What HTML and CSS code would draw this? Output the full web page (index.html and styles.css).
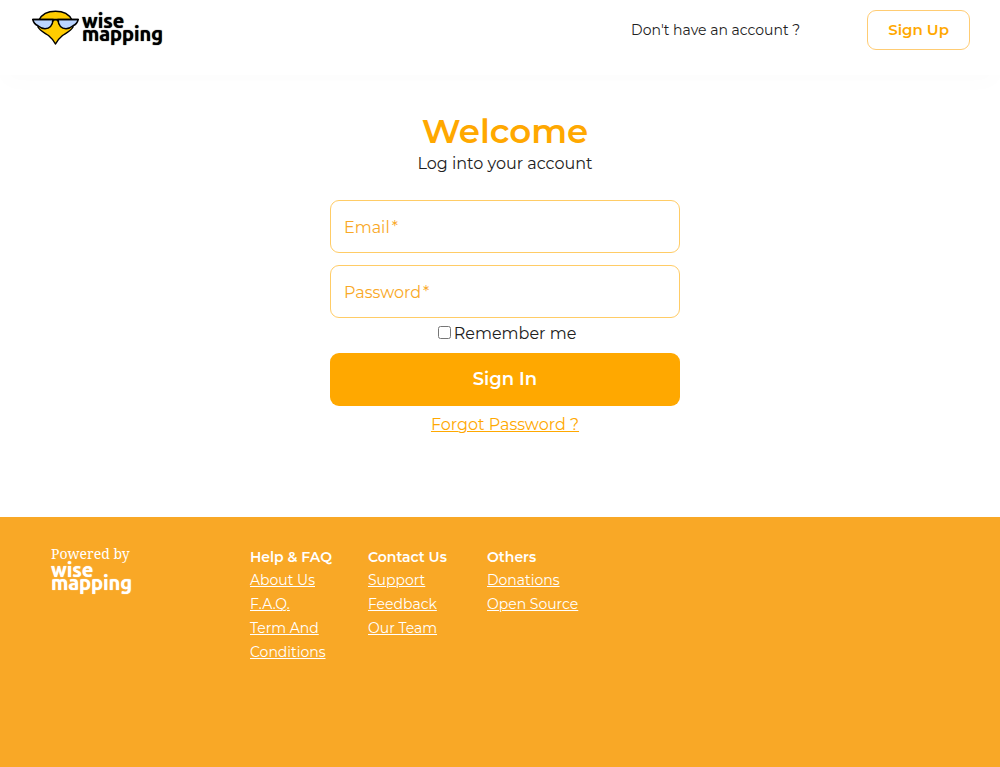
FILE: index.html
```html
<!DOCTYPE html>
<html lang="en">
<head>
<meta charset="utf-8">
<meta name="viewport" content="width=device-width, initial-scale=1">
<title>Login | WiseMapping</title>
<link rel="stylesheet" href="styles.css">
</head>
<body class="page">
<header class="header">
  <a class="logo" href="#" aria-label="WiseMapping">
    <svg class="logo-mark" viewBox="0 0 48 36" aria-hidden="true">
      <path d="M7 10C10 4 16 1.300 23.500 1.300s13.500 2.700 16.500 8.700l1 7c-2 4-7 6-10.500 8.500-3 2.500-5 4.500-7 8.500-2-4-4-6-7-8.500-3.500-2.500-8.500-4.500-10.500-8.500z" fill="#ffcc00" stroke="#000" stroke-width="1.500" stroke-linejoin="round"/>
      <path d="M.8 9.500H21.200C20.500 15.500 17.500 18.700 13 18.700 9.500 18.700 8.500 18 6 15.800 3 14.500 1.500 12.500.8 9.500z" fill="#bcd6ff" stroke="#000" stroke-width="1.500" stroke-linejoin="round"/>
      <path d="M46.200 9.500H25.800C26.500 15.500 29.500 18.700 34 18.700 37.500 18.700 38.500 18 41 15.800 44 14.500 45.500 12.500 46.200 9.500z" fill="#bcd6ff" stroke="#000" stroke-width="1.500" stroke-linejoin="round"/>
      <path d="M.8 9.500H46.200M20.500 11.500C21.500 9.300 25.500 9.300 26.500 11.500" fill="none" stroke="#000" stroke-width="1.500" stroke-linecap="round"/>
    </svg>
    <span class="wordmark">wise<br>mapping</span>
  </a>
  <span class="header-note">Don't have an account ?</span>
  <button class="signup" type="button">Sign Up</button>
</header>

<main class="main">
  <h1 class="title">Welcome</h1>
  <p class="subtitle">Log into your account</p>
  <form class="form">
    <div class="field">
      <input class="field-input" id="email" type="email" required>
      <label class="field-label" for="email">Email<span class="star">*</span></label>
    </div>
    <div class="field">
      <input class="field-input" id="password" type="password" required>
      <label class="field-label" for="password">Password<span class="star">*</span></label>
    </div>
    <div class="remember">
      <input class="remember-box" id="remember" type="checkbox"><label for="remember">Remember me</label>
    </div>
    <button class="signin" type="submit">Sign In</button>
  </form>
  <a class="forgot" href="#">Forgot Password ?</a>
</main>

<footer class="footer">
  <div class="powered">
    <span class="powered-by">Powered by</span>
    <span class="wordmark wordmark-footer">wise<br>mapping</span>
  </div>
  <nav class="links" aria-labelledby="help">
    <h2 class="links-title" id="help">Help &amp; FAQ</h2>
    <a href="#">About Us</a>
    <a href="#">F.A.Q.</a>
    <a href="#">Term And Conditions</a>
  </nav>
  <nav class="links" aria-labelledby="contact">
    <h2 class="links-title" id="contact">Contact Us</h2>
    <a href="#">Support</a>
    <a href="#">Feedback</a>
    <a href="#">Our Team</a>
  </nav>
  <nav class="links" aria-labelledby="others">
    <h2 class="links-title" id="others">Others</h2>
    <a href="#">Donations</a>
    <a href="#">Open Source</a>
  </nav>
</footer>
</body>
</html>
```

FILE: styles.css
```css
* { box-sizing: border-box; }

.page {
  margin: 0;
  min-height: 100vh;
  display: flex;
  flex-direction: column;
  background: #fff;
  color: #212121;
  font-family: Montserrat, Inter, "Open Sans", sans-serif;
  font-size: 16px;
  font-weight: 400;
  line-height: 24px;
}

button, input { font-family: inherit; }

.header {
  display: flex;
  align-items: flex-start;
  padding: 10px 30px 25px 32px;
  box-shadow: 0 12px 20px -2px rgba(0, 0, 0, 0.012);
}

.logo {
  display: flex;
  gap: 2px;
  margin-right: auto;
  color: #000;
  text-decoration: none;
}

.logo-mark { width: 48px; height: 36px; }

.wordmark {
  padding-top: 4px;
  font-family: Ubuntu, "Noto Sans", sans-serif;
  font-size: 20px;
  font-weight: 700;
  line-height: 13px;
  text-shadow: 0 0 1px currentColor;
}

.header-note {
  margin-right: 67px;
  font-size: 14px;
  line-height: 40px;
}

.signup {
  height: 40px;
  padding: 0 20px 2px;
  border: 1px solid #ffcc73;
  border-radius: 9px;
  background: #fff;
  color: #ffa800;
  font-size: 15px;
  font-weight: 600;
}

.main {
  flex: 1;
  display: flex;
  flex-direction: column;
  align-items: center;
  padding: 36px 20px 40px 30px;
}

.title {
  margin: 0;
  color: #ffa800;
  font-size: 34px;
  font-weight: 600;
  line-height: 40px;
}

.subtitle { margin: 1px 0 24px; }

.form {
  display: flex;
  flex-direction: column;
  width: 100%;
  max-width: 350px;
}

.field {
  display: grid;
  margin-bottom: 12px;
}

.field-input, .field-label { grid-area: 1 / 1; }

.field-input {
  width: 100%;
  height: 53px;
  padding: 0 14px;
  border: 1px solid #ffcc66;
  border-radius: 9px;
  background: #fff;
  font-size: 16px;
}

.field-label {
  align-self: center;
  justify-self: start;
  padding-top: 2px;
  margin-left: 14px;
  color: #f9a826;
}

.field-input:focus + .field-label,
.field-input:valid + .field-label { visibility: hidden; }

.star { margin-left: 2px; }

.remember {
  margin: -8px 0 7px;
  text-align: center;
}

.remember-box {
  width: 13px;
  height: 13px;
  margin: 0 3px 0 4px;
}

.signin {
  height: 53px;
  margin-bottom: 7px;
  padding: 0 20px 2px;
  border: 0;
  border-radius: 9px;
  background: #ffa800;
  color: #fff;
  font-size: 18px;
  font-weight: 600;
}

.forgot {
  color: #ffa800;
  text-decoration-thickness: 1px;
}

.footer {
  display: grid;
  grid-template-columns: 199px 118px 119px 118px;
  align-items: start;
  min-height: 250px;
  padding: 28px 30px 30px 51px;
  background: #f9a826;
  color: #fff;
  font-size: 14px;
}

.powered { display: flex; flex-direction: column; }

.powered-by {
  font-family: "Roboto Slab", "Noto Serif", "DejaVu Serif", serif;
  font-size: 14px;
  font-weight: 400;
  line-height: 17px;
}

.wordmark-footer { padding-top: 1px; }

.links {
  display: flex;
  flex-direction: column;
  align-items: flex-start;
  padding-top: 1px;
}

.links a {
  padding-right: 24px;
  color: #fff;
  text-decoration: underline;
  text-decoration-thickness: 1px;
}

.links-title {
  margin: 0;
  font-size: 14px;
  font-weight: 600;
  line-height: 22px;
}
```
